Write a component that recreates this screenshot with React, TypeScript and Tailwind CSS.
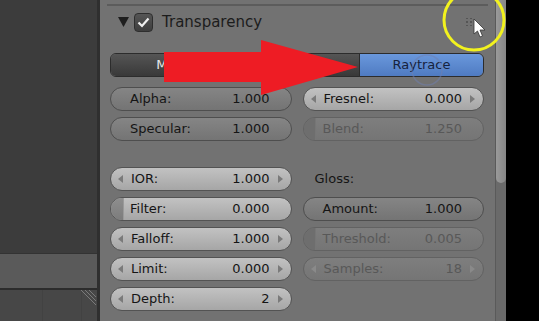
import React from "react";

type Kind = "slider" | "number" | "sliderLight" | "disSlider" | "disNumber";

function Arrow({ dir, dim }: { dir: "l" | "r"; dim?: boolean }) {
  return (
    <svg width="6" height="8" viewBox="0 0 6 8" className="shrink-0">
      {dir === "l" ? (
        <polygon points="5,0 5,8 0,4" fill={dim ? "#8a8a8a" : "#7a7a7a"} />
      ) : (
        <polygon points="1,0 1,8 6,4" fill={dim ? "#8a8a8a" : "#7a7a7a"} />
      )}
    </svg>
  );
}

function Field({ label, value, kind }: { label: string; value: string; kind: Kind }) {
  const disabled = kind === "disSlider" || kind === "disNumber";
  const arrows = kind === "number" || kind === "disNumber";
  let bg = "bg-gradient-to-b from-[#858585] to-[#747474] border-[#4e4e4e]";
  if (kind === "number" || kind === "sliderLight")
    bg = "bg-gradient-to-b from-[#c2c2c2] to-[#a6a6a6] border-[#535353]";
  if (disabled) bg = "bg-gradient-to-b from-[#7e7e7e] to-[#757575] border-[#626262]";
  const text = disabled ? "text-[#585858]" : "text-[#151515]";
  return (
    <div className={`relative h-[24px] rounded-full border overflow-hidden ${bg}`}>
      {kind === "sliderLight" && (
        <div className="absolute left-0 top-0 bottom-0 w-[13px] bg-gradient-to-b from-[#8e8e8e] to-[#7c7c7c] border-r border-[#9a9a9a]" />
      )}
      {kind === "disSlider" && (
        <div className="absolute left-0 top-0 bottom-0 w-[12px] bg-[#6e6e6e] border-r border-[#767676]" />
      )}
      <div className={`relative flex h-full items-center text-[13px] ${text}`}>
        {arrows ? (
          <>
            <div className="ml-[7px] mr-[7px] flex items-center">
              <Arrow dir="l" dim={disabled} />
            </div>
            <span className="flex-1">{label}</span>
            <span>{value}</span>
            <div className="ml-[7px] mr-[8px] flex items-center">
              <Arrow dir="r" dim={disabled} />
            </div>
          </>
        ) : (
          <>
            <span className="ml-[19px] flex-1">{label}</span>
            <span className="mr-[21px]">{value}</span>
          </>
        )}
      </div>
    </div>
  );
}

export default function App() {
  return (
    <div
      className="relative flex h-[321px] w-[539px] overflow-hidden bg-black"
      style={{ fontFamily: '"DejaVu Sans", "Liberation Sans", sans-serif' }}
    >
      {/* left area */}
      <div className="flex w-[97px] flex-col">
        <div className="flex-1 bg-[#3c3c3c]" />
        <div className="h-[35px] bg-[#5a5a5a] border-t border-[#333]" />
        <div className="h-[2px] bg-[#2c2c2c]" />
        <div className="relative flex h-[31px] bg-[#474747]">
          <div className="w-[43px] border-r border-[#424242]" />
          <div className="w-[39px] border-r border-[#424242]" />
          <div className="flex-1" />
          <svg className="absolute right-0 top-0" width="18" height="16" viewBox="0 0 18 16">
            <line x1="2" y1="0" x2="17" y2="15" stroke="#7a7a7a" strokeWidth="1" />
            <line x1="6" y1="0" x2="17" y2="11" stroke="#7a7a7a" strokeWidth="1" />
            <line x1="10" y1="0" x2="17" y2="7" stroke="#7a7a7a" strokeWidth="1" />
          </svg>
        </div>
      </div>
      <div className="w-[3px] bg-[#2f2f2f]" />

      {/* properties panel */}
      <div className="w-[395px] bg-[#727272] pl-[10px] pr-[11px]">
        <div className="ml-[-3px] mr-[-4px] mt-[4px] h-[2px] bg-[#5c5c5c]" />
        <div className="flex h-[32px] items-center">
          <svg width="11" height="10" viewBox="0 0 11 10" className="ml-[8px]">
            <polygon points="0,0 11,0 5.5,10" fill="#1e1e1e" />
          </svg>
          <div className="ml-[5px] flex h-[19px] w-[19px] items-center justify-center rounded-[4px] border border-[#2e2e2e] bg-gradient-to-b from-[#555] to-[#3e3e3e]">
            <svg width="13" height="11" viewBox="0 0 13 11">
              <polyline points="1.5,5.5 5,9 11.5,1.5" fill="none" stroke="#f0f0f0" strokeWidth="2.2" />
            </svg>
          </div>
          <span className="ml-[9px] text-[15px] text-[#1c1c1c]">Transparency</span>
          <div className="flex-1" />
          <div className="mr-[12px] grid grid-cols-2 gap-[2px]">
            {[0, 1, 2, 3, 4, 5].map((i) => (
              <div key={i} className="h-[1.5px] w-[2px] bg-[#555]" />
            ))}
          </div>
        </div>

        {/* mode buttons */}
        <div className="mt-[15px] grid h-[24px] grid-cols-3 overflow-hidden rounded-[6px] border border-[#2c2c2c] text-[13px]">
          <div className="flex min-w-0 items-center justify-center bg-gradient-to-b from-[#555555] to-[#393939] text-[#e8e8e8]">
            Mask
          </div>
          <div className="flex min-w-0 items-center justify-center overflow-hidden whitespace-nowrap border-l border-[#2c2c2c] bg-gradient-to-b from-[#555555] to-[#393939] pr-[16px] text-[#e8e8e8]">
            Z Transparency
          </div>
          <div className="flex min-w-0 items-center justify-center border-l border-[#2c2c2c] bg-gradient-to-b from-[#6a98dc] to-[#4f7bc2] text-[#16233d]">
            Raytrace
          </div>
        </div>

        <div className="mt-[10px] grid grid-cols-2 gap-x-[11px] gap-y-[6px]">
          <Field label="Alpha:" value="1.000" kind="slider" />
          <Field label="Fresnel:" value="0.000" kind="number" />
          <Field label="Specular:" value="1.000" kind="slider" />
          <Field label="Blend:" value="1.250" kind="disSlider" />
        </div>

        <div className="mt-[26px] grid grid-cols-2 gap-x-[11px]">
          <div className="flex flex-col gap-[6px]">
            <Field label="IOR:" value="1.000" kind="number" />
            <Field label="Filter:" value="0.000" kind="sliderLight" />
            <Field label="Falloff:" value="1.000" kind="number" />
            <Field label="Limit:" value="0.000" kind="number" />
            <Field label="Depth:" value="2" kind="number" />
          </div>
          <div className="flex flex-col gap-[6px]">
            <div className="flex h-[24px] items-center pl-[12px] text-[13px] text-[#151515]">Gloss:</div>
            <Field label="Amount:" value="1.000" kind="slider" />
            <Field label="Threshold:" value="0.005" kind="disSlider" />
            <Field label="Samples:" value="18" kind="disNumber" />
          </div>
        </div>
      </div>

      {/* scrollbar */}
      <div className="w-[1px] bg-[#5a5a5a]" />
      <div className="flex w-[10px] flex-col bg-[#6a6a6a]">
        <div className="h-[183px] rounded-b-[5px] bg-gradient-to-r from-[#9a9a9a] to-[#868686]" />
      </div>
      <div className="flex-1 bg-black" />

      {/* overlays */}
      <svg className="pointer-events-none absolute left-0 top-0" width="539" height="321" viewBox="0 0 539 321">
        <circle cx="427" cy="70" r="15" fill="none" stroke="#6f7fb0" strokeOpacity="0.5" strokeWidth="1.5" />
        <polygon points="164,52 261,52 261,40 358,67 261,95 261,82 164,82" fill="#ee1c24" />
        <circle cx="474" cy="20" r="30" fill="none" stroke="#f2f21e" strokeWidth="3" />
        <polygon
          points="474,19 474,34 477.5,31 480,37 482.5,36 480,30 485,30"
          fill="#ffffff"
          stroke="#333"
          strokeWidth="0.8"
          strokeLinejoin="round"
        />
      </svg>
    </div>
  );
}
